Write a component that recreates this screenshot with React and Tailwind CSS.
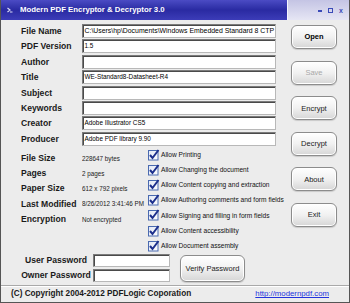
import React from "react";

const fields = [
  ["File Name", "C:\\Users\\hp\\Documents\\Windows Embedded Standard 8 CTP"],
  ["PDF Version", "1.5"],
  ["Author", ""],
  ["Title", "WE-Standard8-Datasheet-R4"],
  ["Subject", ""],
  ["Keywords", ""],
  ["Creator", "Adobe Illustrator CS5"],
  ["Producer", "Adobe PDF library 9.90"],
];

const info = [
  ["File Size", "228647 bytes"],
  ["Pages", "2 pages"],
  ["Paper Size", "612 x 792 pixels"],
  ["Last Modified", "8/26/2012 3:41:46 PM"],
  ["Encryption", "Not encrypted"],
];

const perms = [
  "Allow Printing",
  "Allow Changing the document",
  "Allow Content copying and extraction",
  "Allow Authoring comments and form fields",
  "Allow Signing and filling in form fields",
  "Allow Content accessibility",
  "Allow Document assembly",
];

const buttons = [
  { label: "Open", bold: true },
  { label: "Save", disabled: true },
  { label: "Encrypt" },
  { label: "Decrypt" },
  { label: "About" },
  { label: "Exit" },
];

function Check() {
  return (
    <svg width="12" height="12" viewBox="0 0 12 12" className="shrink-0">
      <defs>
        <linearGradient id="cbg" x1="0" y1="0" x2="1" y2="1">
          <stop offset="0" stopColor="#dfe6f5" />
          <stop offset="1" stopColor="#ffffff" />
        </linearGradient>
      </defs>
      <rect x="0.5" y="1.5" width="9.5" height="9.5" fill="url(#cbg)" stroke="#4a6ab0" />
      <path d="M2 6 L4.5 9 L10.5 1" fill="none" stroke="#1c2f8c" strokeWidth="2" />
    </svg>
  );
}

function Btn({ label, bold, disabled, className = "" }) {
  return (
    <div
      className={`flex items-center justify-center rounded-[6px] border border-[#8c8c8c] bg-gradient-to-b from-[#ffffff] via-[#f1f1f1] to-[#d6d6d6] shadow-[inset_0_0_0_1px_#ffffff,0_1px_1px_rgba(0,0,0,0.15)] text-[7.5px] ${
        bold ? "font-bold text-black" : disabled ? "text-[#a8a8a8]" : "text-[#222]"
      } ${className}`}
    >
      {label}
    </div>
  );
}

function Field({ value, size }) {
  return (
    <div
      className={`w-[194px] h-[14px] bg-white border border-t-[#7b7b7b] border-l-[#7b7b7b] border-b-[#b8b8b8] border-r-[#b8b8b8] shadow-[inset_1px_1px_0_#4a4a4a] overflow-hidden whitespace-nowrap ${size} leading-[12px] pl-[1.5px] text-black`}
    >
      {value}
    </div>
  );
}

export default function App() {
  return (
    <div
      className="w-[350px] h-[303px] flex flex-col bg-[#ececec] overflow-hidden border-x border-b border-[#555]"
      style={{ fontFamily: '"Liberation Sans", Arial, sans-serif' }}
    >
      {/* title bar */}
      <div className="h-[20px] flex shrink-0">
        <div className="flex-1 flex items-center bg-gradient-to-b from-[#4b4bc4] via-[#2a2aa2] to-[#3c3cb8]">
          <div className="ml-[6px] w-[6px] h-[6px] flex items-center justify-center">
            <svg width="6" height="6" viewBox="0 0 6 6">
              <path d="M0.5 1 L3 3 L0.5 5 M3 5 H5.5" fill="none" stroke="#dcdcf5" strokeWidth="1.2" />
            </svg>
          </div>
          <span className="ml-[7px] text-[7.8px] font-bold text-white">
            Modern PDF Encryptor &amp; Decryptor 3.0
          </span>
        </div>
        <div className="w-[1px] bg-[#f4f4ff]" />
        <div className="w-[61px] flex items-center justify-end gap-[6px] pr-[6px] bg-gradient-to-b from-[#c4c4e4] to-[#e6e6f4]">
          <div className="w-[4px] h-[1.5px] bg-[#3a4ab8] mt-[2px]" />
          <div className="w-[5px] h-[5px] border-[1.5px] border-[#3a4ab8]" />
          <span className="text-[7px] font-bold text-[#3a4ab8] leading-none">x</span>
        </div>
      </div>

      {/* body */}
      <div className="flex-1 flex flex-col">
        <div className="flex">
          <div className="w-[281px] flex flex-col">
            <div className="flex flex-col pt-[4px]">
              {fields.map(([label, value], i) => (
                <div key={label} className="h-[15.4px] flex items-start">
                  <div className="w-[81px] pl-[20px] text-[8.6px] font-bold text-[#1a1a1a] leading-[14px]">{label}</div>
                  <Field value={value} size={i === 0 ? "text-[6.9px]" : "text-[6.4px]"} />
                </div>
              ))}
            </div>

            <div className="flex">
              <div className="w-[147px] flex flex-col pt-[3.5px]">
                {info.map(([label, value]) => (
                  <div key={label} className="h-[15.3px] flex items-center">
                    <div className="w-[81px] shrink-0 pl-[20px] text-[8.6px] font-bold text-[#1a1a1a] whitespace-nowrap">{label}</div>
                    <div className="w-[66px] overflow-hidden whitespace-nowrap text-[6.3px] text-[#222]">{value}</div>
                  </div>
                ))}
              </div>
              <div className="flex flex-col">
                {perms.map((p) => (
                  <div key={p} className="h-[15.2px] flex items-center">
                    <Check />
                    <span className="ml-[1px] text-[6.6px] text-[#111] whitespace-nowrap">{p}</span>
                  </div>
                ))}
              </div>
            </div>
          </div>

          <div className="ml-[9px] pt-[5px] flex flex-col gap-[11.6px]">
            {buttons.map((b) => (
              <Btn key={b.label} {...b} className="w-[46px] h-[24px]" />
            ))}
          </div>
        </div>

        {/* passwords */}
        <div className="flex mt-[1px]">
          <div className="flex flex-col gap-[2px]">
            {["User Password", "Owner Password"].map((l) => (
              <div key={l} className="flex items-center h-[13px]">
                <div className="w-[70px] ml-[20px] text-center text-[8.6px] font-bold text-[#1a1a1a] whitespace-nowrap">{l}</div>
                <div className="ml-[2px]">
                  <div className="w-[77px] h-[13px] bg-white border border-t-[#7b7b7b] border-l-[#7b7b7b] border-b-[#b8b8b8] border-r-[#b8b8b8] shadow-[inset_1px_1px_0_#4a4a4a]" />
                </div>
              </div>
            ))}
          </div>
          <Btn label="Verify Password" className="ml-[10px] mt-[1px] w-[65px] h-[27px]" />
        </div>

        {/* footer */}
        <div className="mt-[3px] border-t border-[#a9a9a9] flex-1 flex items-center justify-between pl-[10px] pr-[20px] shadow-[inset_0_1px_0_#ffffff]">
          <span className="text-[8.2px] font-bold text-[#1a1a1a]">(C) Copyright 2004-2012 PDFLogic Coporation</span>
          <span className="text-[7.8px] text-[#2233dd] underline">http://modernpdf.com</span>
        </div>
      </div>
    </div>
  );
}
